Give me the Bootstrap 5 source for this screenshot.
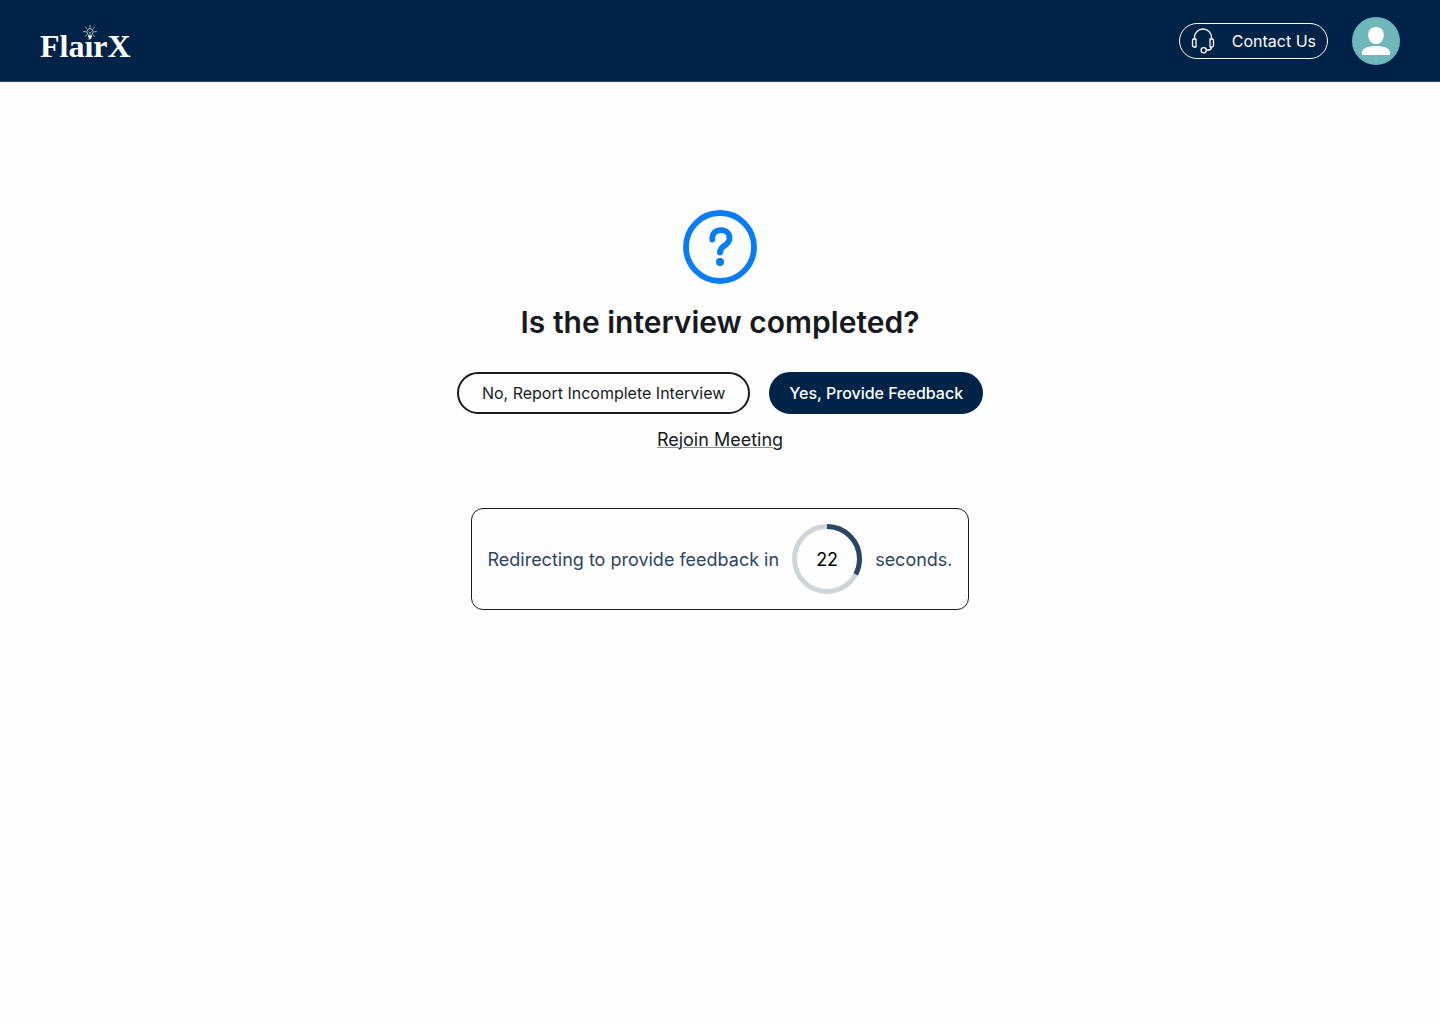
<!DOCTYPE html>
<html lang="en">
<head>
<meta charset="utf-8">
<meta name="viewport" content="width=device-width, initial-scale=1">
<title>FlairX – Interview status</title>
<link href="https://cdn.jsdelivr.net/npm/bootstrap@5.3.0/dist/css/bootstrap.min.css" rel="stylesheet">
<style>
  :root { --navy: #002347; --ink: #171b21; --slate: #2c4560; --blue: #087cf3; }
  body { font-family: Inter, "Liberation Sans", sans-serif; background: #fefefe; color: var(--ink); }
  .site-header { background: var(--navy); border-bottom: 1px solid #294662; padding: 17px 40px 16px; }
  .brand-logo { color: #fff; font: bold 32px/32px "Liberation Serif", serif; margin-top: 10px; }
  .brand-bulb { position: absolute; left: 43px; top: -5px; }
  .contact-btn { width: 149px; height: 36px; border: 1px solid #fff; border-radius: 18px; color: #fff; padding: 0 11px; font-size: 16px; }
  .contact-btn:hover { background: #fff; color: var(--navy); }
  .prompt { padding-top: 128px; }
  .prompt-title { font-size: 30px; line-height: 40px; font-weight: 600; margin: 18px 0 30px; }
  .choice-btn { height: 42px; border-radius: 21px; border: 2px solid var(--ink); font-size: 16px; line-height: 24px; padding: 0 23px; color: var(--ink); }
  .choice-btn.choice-yes { background: var(--navy); border-color: var(--navy); color: #fff; font-weight: 500; padding: 0 18px; }
  .choice-row { gap: 19px; }
  .rejoin-link { color: var(--ink); font-size: 18px; line-height: 24px; margin-top: 14px; text-decoration-color: #8b8e93; text-decoration-thickness: 1px; }
  .redirect-box { border: 1px solid var(--ink); border-radius: 12px; padding: 15px; margin-top: 56px; color: var(--slate); font-size: 18px; gap: 13px; }
  .timer { width: 70px; height: 70px; }
  .timer-count { color: #000; font-size: 18px; }
</style>
<script src="https://cdn.jsdelivr.net/npm/bootstrap@5.3.0/dist/js/bootstrap.bundle.min.js" defer></script>
</head>
<body>
<header class="site-header d-flex align-items-center justify-content-between">
  <a href="#" class="brand-logo position-relative text-decoration-none">FlairX
    <svg class="brand-bulb" width="14" height="17" viewBox="0 0 14 17" fill="none" stroke="#b9c4cf" stroke-width="1" stroke-linecap="round" aria-hidden="true">
      <path d="M2.500 8h8v6.500h-8z" fill="#002347" stroke="none"/>
      <path d="M5.500 10.500C5.500 9.200 3.900 8.600 3.900 6.700a3.100 3.100 0 0 1 6.200 0c0 1.900-1.600 2.500-1.600 3.800z"/>
      <path d="M5.800 7l1.200 1 1.200-1M7 8v2.500" stroke-width=".8"/>
      <path d="M5.700 11.500h2.600M6.200 12.900h1.600" stroke="#fff" stroke-width="1.500"/>
      <path d="M7 .7v1.600M2.500 2.200l1.100 1.100M11.500 2.200l-1.100 1.100M.6 6.700h1.700M11.700 6.700h1.700M2.400 11.200l1.100-1M11.600 11.200l-1.100-1" stroke-width="1"/>
    </svg>
  </a>
  <div class="d-flex align-items-center gap-4">
    <button type="button" class="btn contact-btn d-flex align-items-center justify-content-between">
      <svg width="24" height="26" viewBox="0 0 24 26" fill="none" stroke="currentColor" stroke-width="1.300" stroke-linejoin="round" aria-hidden="true">
        <path d="M3.500 11V9.500a8.500 8.500 0 0 1 17 0V11"/>
        <path d="M3 11h2v8H3a1.500 1.500 0 0 1-1.500-1.500v-5A1.500 1.500 0 0 1 3 11zM21 11h-2v8h2a1.500 1.500 0 0 0 1.500-1.500v-5A1.500 1.500 0 0 0 21 11z"/>
        <path d="M20.500 19c0 2-1 3-3 3h-2.200"/>
        <circle cx="12.700" cy="22.200" r="2.600"/>
      </svg>
      Contact Us
    </button>
    <a href="#" class="d-flex" aria-label="Profile">
      <svg width="48" height="48" viewBox="0 0 48 48" aria-hidden="true">
        <circle cx="24" cy="24" r="24" fill="#6fb7bb"/>
        <path d="M24 10c4.800 0 7.800 3 7.800 8.200S28.300 27 24 27s-7.800-3.600-7.800-8.800S19.200 10 24 10z" fill="#fff"/>
        <path d="M10 38v-2.500c0-4.500 7-6.500 14-6.500s14 2 14 6.500V38z" fill="#fff"/>
      </svg>
    </a>
  </div>
</header>

<main class="prompt d-flex flex-column align-items-center px-3">
  <svg width="74" height="74" viewBox="0 0 74 74" fill="none" stroke="#087cf3" stroke-linecap="round" stroke-linejoin="round" aria-hidden="true">
    <circle cx="37" cy="37" r="34" stroke-width="5.800"/>
    <path d="M29.300 29.500C29 23.500 32.600 20.100 38 20.100c5.200 0 8.500 3.200 8.500 8 0 4.200-2.500 6-5.200 7.700-2.900 1.900-4.300 3.300-4.300 6.700" stroke-width="5.800"/>
    <circle cx="37" cy="52" r="4" fill="#087cf3" stroke="none"/>
  </svg>
  <h1 class="prompt-title text-center">Is the interview completed?</h1>
  <div class="choice-row d-flex flex-wrap justify-content-center">
    <button type="button" class="btn choice-btn">No, Report Incomplete Interview</button>
    <button type="button" class="btn choice-btn choice-yes">Yes, Provide Feedback</button>
  </div>
  <a href="#" class="rejoin-link">Rejoin Meeting</a>
  <div class="redirect-box d-flex align-items-center" role="timer">
    <span>Redirecting to provide feedback in</span>
    <div class="timer position-relative flex-shrink-0">
      <svg class="d-block" width="70" height="70" viewBox="0 0 70 70" fill="none" stroke-width="5" aria-hidden="true">
        <circle cx="35" cy="35" r="32.500" stroke="#d0d4d8"/>
        <circle cx="35" cy="35" r="32.500" stroke="#2c4560" pathLength="360" stroke-dasharray="118 242" transform="rotate(-90 35 35)"/>
      </svg>
      <span class="timer-count position-absolute top-50 start-50 translate-middle">22</span>
    </div>
    <span>seconds.</span>
  </div>
</main>
</body>
</html>
